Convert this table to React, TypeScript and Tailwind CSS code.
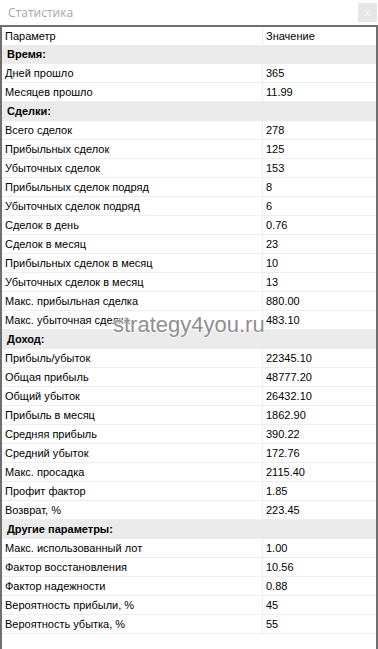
import React from "react";

type Row = { label: string; value?: string; section?: boolean };

const rows: Row[] = [
  { label: "Время:", section: true },
  { label: "Дней прошло", value: "365" },
  { label: "Месяцев прошло", value: "11.99" },
  { label: "Сделки:", section: true },
  { label: "Всего сделок", value: "278" },
  { label: "Прибыльных сделок", value: "125" },
  { label: "Убыточных сделок", value: "153" },
  { label: "Прибыльных сделок подряд", value: "8" },
  { label: "Убыточных сделок подряд", value: "6" },
  { label: "Сделок в день", value: "0.76" },
  { label: "Сделок в месяц", value: "23" },
  { label: "Прибыльных сделок в месяц", value: "10" },
  { label: "Убыточных сделок в месяц", value: "13" },
  { label: "Макс. прибыльная сделка", value: "880.00" },
  { label: "Макс. убыточная сделка", value: "483.10" },
  { label: "Доход:", section: true },
  { label: "Прибыль/убыток", value: "22345.10" },
  { label: "Общая прибыль", value: "48777.20" },
  { label: "Общий убыток", value: "26432.10" },
  { label: "Прибыль в месяц", value: "1862.90" },
  { label: "Средняя прибыль", value: "390.22" },
  { label: "Средний убыток", value: "172.76" },
  { label: "Макс. просадка", value: "2115.40" },
  { label: "Профит фактор", value: "1.85" },
  { label: "Возврат, %", value: "223.45" },
  { label: "Другие параметры:", section: true },
  { label: "Макс. использованный лот", value: "1.00" },
  { label: "Фактор восстановления", value: "10.56" },
  { label: "Фактор надежности", value: "0.88" },
  { label: "Вероятность прибыли, %", value: "45" },
  { label: "Вероятность убытка, %", value: "55" },
];

export default function App() {
  return (
    <div className="w-[378px] h-[649px] overflow-hidden bg-white font-['Liberation_Sans',Arial,sans-serif] text-[11px] text-black">
      {/* Title bar */}
      <div className="h-[25px] flex items-center justify-between pl-2 pr-[1px]">
        <span className="font-['Open_Sans',sans-serif] text-[12px] text-[#a8a8a8]">Статистика</span>
        <div className="w-[19px] h-[19px] bg-[#e6e6e6] flex items-center justify-center text-[10px] text-[#f8f8f8] leading-none">
          x
        </div>
      </div>

      {/* Table */}
      <div className="relative h-[624px] border-t-2 border-x-2 border-[#6f6f6f]">
        <div className="flex h-[18px] items-center bg-white">
          <div className="w-[261px] pl-[3px] border-r border-[#ececec] h-full flex items-center">Параметр</div>
          <div className="flex-1 pl-[3px]">Значение</div>
        </div>
        {rows.map((r) =>
          r.section ? (
            <div key={r.label} className="h-[19px] flex items-center bg-[#ebebeb] pl-[5px] font-bold">
              {r.label}
            </div>
          ) : (
            <div key={r.label} className="h-[19px] flex border-b border-[#eeeeee]">
              <div className="w-[261px] pl-[3px] border-r border-[#eeeeee] flex items-center">{r.label}</div>
              <div className="flex-1 pl-[3px] flex items-center">{r.value}</div>
            </div>
          )
        )}

        {/* watermark */}
        <div className="absolute left-[111px] top-[287px] text-[22px] leading-none text-[#909090] font-['Liberation_Sans',Arial,sans-serif] [text-shadow:0_0_2px_#fff,0_0_2px_#fff,0_0_3px_#fff]">
          strategy4you.ru
        </div>
      </div>
    </div>
  );
}
